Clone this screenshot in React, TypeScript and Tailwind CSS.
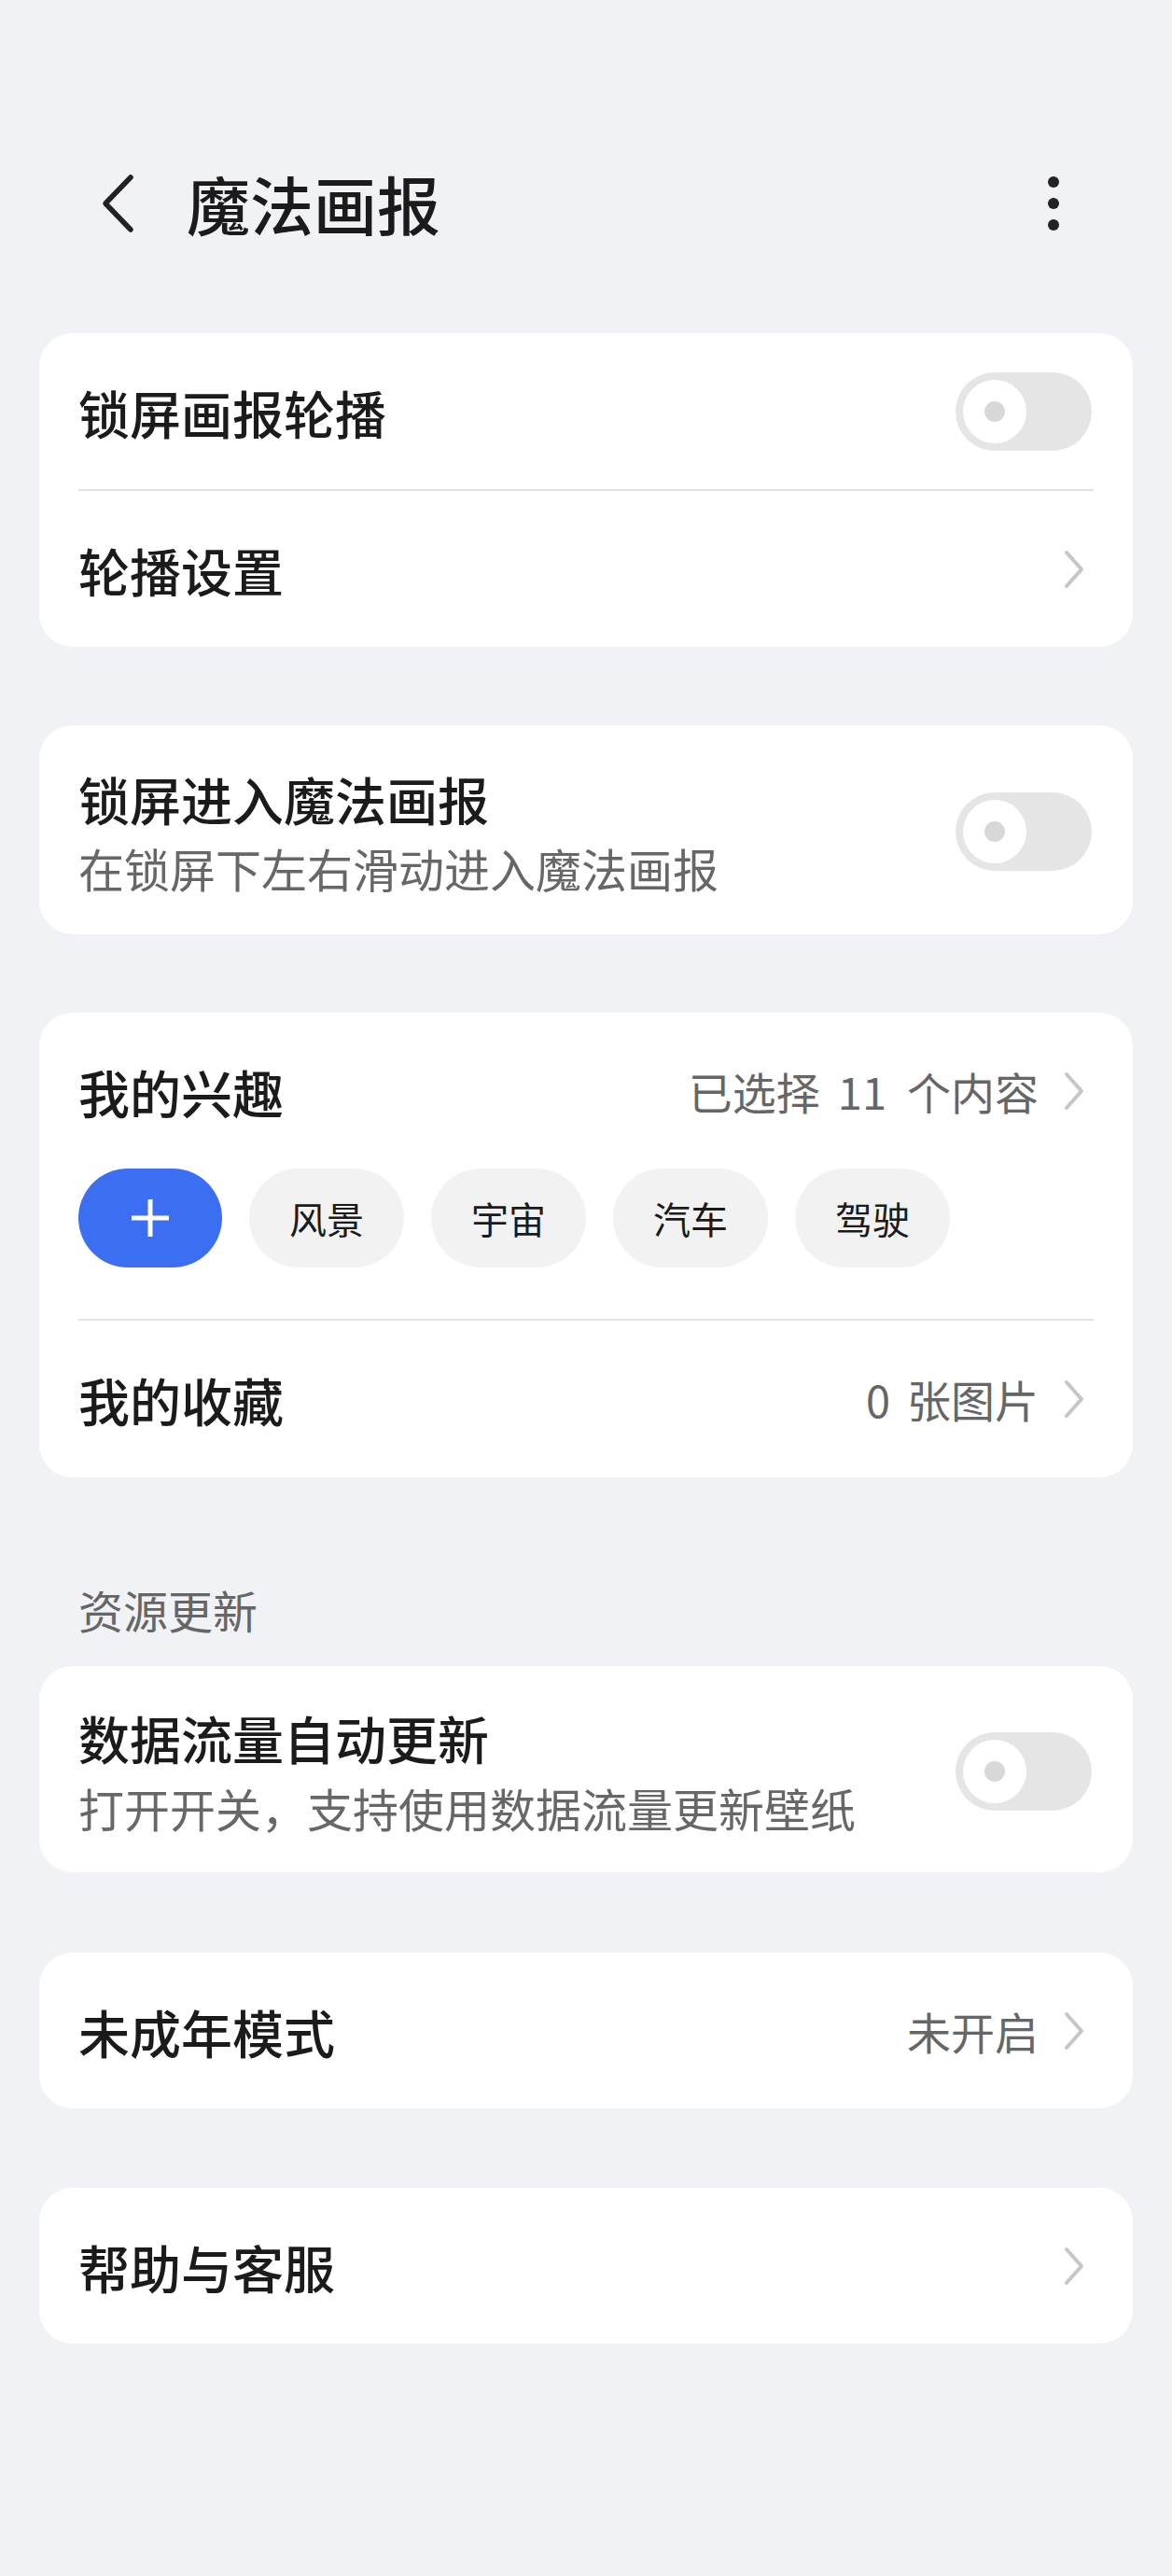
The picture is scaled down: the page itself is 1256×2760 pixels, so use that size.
import React from "react";

function Chevron() {
  return (
    <svg width="22" height="42" viewBox="0 0 22 42" className="shrink-0">
      <polyline points="3,3 19,21 3,39" fill="none" stroke="#c6c6c6" strokeWidth="4" strokeLinecap="round" strokeLinejoin="round" />
    </svg>
  );
}

function Toggle() {
  return (
    <div className="w-[146px] h-[84px] rounded-full bg-[#e5e5e5] flex items-center pl-[8px] shrink-0">
      <div className="w-[68px] h-[68px] rounded-full bg-white flex items-center justify-center">
        <div className="w-[22px] h-[22px] rounded-full bg-[#d8d8d8]" />
      </div>
    </div>
  );
}

function Divider() {
  return <div className="ml-[42px] mr-[42px] h-[2px] bg-[#e2e2e2]" />;
}

function NavRow({ label, value, h }: { label: string; value?: React.ReactNode; h: string }) {
  return (
    <div className={`flex items-center justify-between pl-[42px] pr-[52px] ${h}`}>
      <span className="text-[55px] leading-[66px] font-medium text-[#1b1b1b]">{label}</span>
      <div className="flex items-center gap-[27px]">
        {value && <div className="flex items-center text-[47px] leading-[56px] text-[#666666]">{value}</div>}
        <Chevron />
      </div>
    </div>
  );
}

function Chip({ text }: { text: string }) {
  return (
    <div className="h-[106px] px-[43px] rounded-full bg-[#f2f2f2] flex items-center">
      <span className="text-[40px] leading-[48px] text-[#1b1b1b]">{text}</span>
    </div>
  );
}

export default function App() {
  return (
    <div className="w-[1256px] h-[2760px] overflow-hidden bg-[#f1f2f6] font-['Noto_Sans_CJK_SC',sans-serif] px-[42px] pt-[177px]">
      {/* Header */}
      <div className="h-[82px] flex items-center">
        <svg width="36" height="64" viewBox="0 0 36 64" className="ml-[66px] shrink-0">
          <polyline points="32,4 5,32 32,60" fill="none" stroke="#222222" strokeWidth="5.5" strokeLinecap="round" strokeLinejoin="round" />
        </svg>
        <span className="ml-[56px] text-[68px] leading-[82px] font-medium text-[#1b1b1b]">魔法画报</span>
        <div className="ml-auto mr-[79px] flex flex-col items-center gap-[11px]">
          <div className="w-[12px] h-[12px] rounded-full bg-[#222222]" />
          <div className="w-[12px] h-[12px] rounded-full bg-[#222222]" />
          <div className="w-[12px] h-[12px] rounded-full bg-[#222222]" />
        </div>
      </div>

      {/* Card 1 */}
      <div className="mt-[98px] bg-white rounded-[36px]">
        <div className="flex items-center justify-between pl-[42px] pr-[44px] h-[167px]">
          <span className="text-[55px] leading-[66px] font-medium text-[#1b1b1b]">锁屏画报轮播</span>
          <Toggle />
        </div>
        <Divider />
        <NavRow label="轮播设置" h="h-[167px]" />
      </div>

      {/* Card 2 */}
      <div className="mt-[84px] bg-white rounded-[36px] flex items-center justify-between pl-[42px] pr-[44px] pt-[45px] pb-[41px]">
        <div className="flex flex-col gap-[12px]">
          <span className="text-[55px] leading-[66px] font-medium text-[#1b1b1b]">锁屏进入魔法画报</span>
          <span className="text-[49px] leading-[60px] text-[#676767]">在锁屏下左右滑动进入魔法画报</span>
        </div>
        <Toggle />
      </div>

      {/* Card 3 */}
      <div className="mt-[84px] bg-white rounded-[36px]">
        <NavRow
          label="我的兴趣"
          value={
            <>
              <span>已选择</span>
              <span className="ml-[19px]">11</span>
              <span className="ml-[22px]">个内容</span>
            </>
          }
          h="h-[167px]"
        />
        <div className="flex items-center gap-[29px] px-[42px]">
          <div className="w-[154px] h-[106px] rounded-full bg-[#3b6ef1] flex items-center justify-center">
            <svg width="44" height="44" viewBox="0 0 44 44">
              <line x1="22" y1="2" x2="22" y2="42" stroke="white" strokeWidth="5" />
              <line x1="2" y1="22" x2="42" y2="22" stroke="white" strokeWidth="5" />
            </svg>
          </div>
          <Chip text="风景" />
          <Chip text="宇宙" />
          <Chip text="汽车" />
          <Chip text="驾驶" />
        </div>
        <div className="h-[55px]" />
        <Divider />
        <NavRow
          label="我的收藏"
          value={
            <>
              <span>0</span>
              <span className="ml-[18px]">张图片</span>
            </>
          }
          h="h-[168px]"
        />
      </div>

      {/* Section label */}
      <div className="mt-[111px] px-[42px] text-[48px] leading-[60px] text-[#666666]">资源更新</div>

      {/* Card 4 */}
      <div className="mt-[31px] bg-white rounded-[36px] flex items-center justify-between pl-[42px] pr-[44px] pt-[43px] pb-[39px]">
        <div className="flex flex-col gap-[13px]">
          <span className="text-[55px] leading-[66px] font-medium text-[#1b1b1b]">数据流量自动更新</span>
          <span className="text-[49px] leading-[60px] text-[#676767]">打开开关，支持使用数据流量更新壁纸</span>
        </div>
        <Toggle />
      </div>

      {/* Card 5 */}
      <div className="mt-[86px] bg-white rounded-[36px]">
        <NavRow label="未成年模式" value={<span>未开启</span>} h="h-[167px]" />
      </div>

      {/* Card 6 */}
      <div className="mt-[85px] bg-white rounded-[36px]">
        <NavRow label="帮助与客服" h="h-[167px]" />
      </div>
    </div>
  );
}
